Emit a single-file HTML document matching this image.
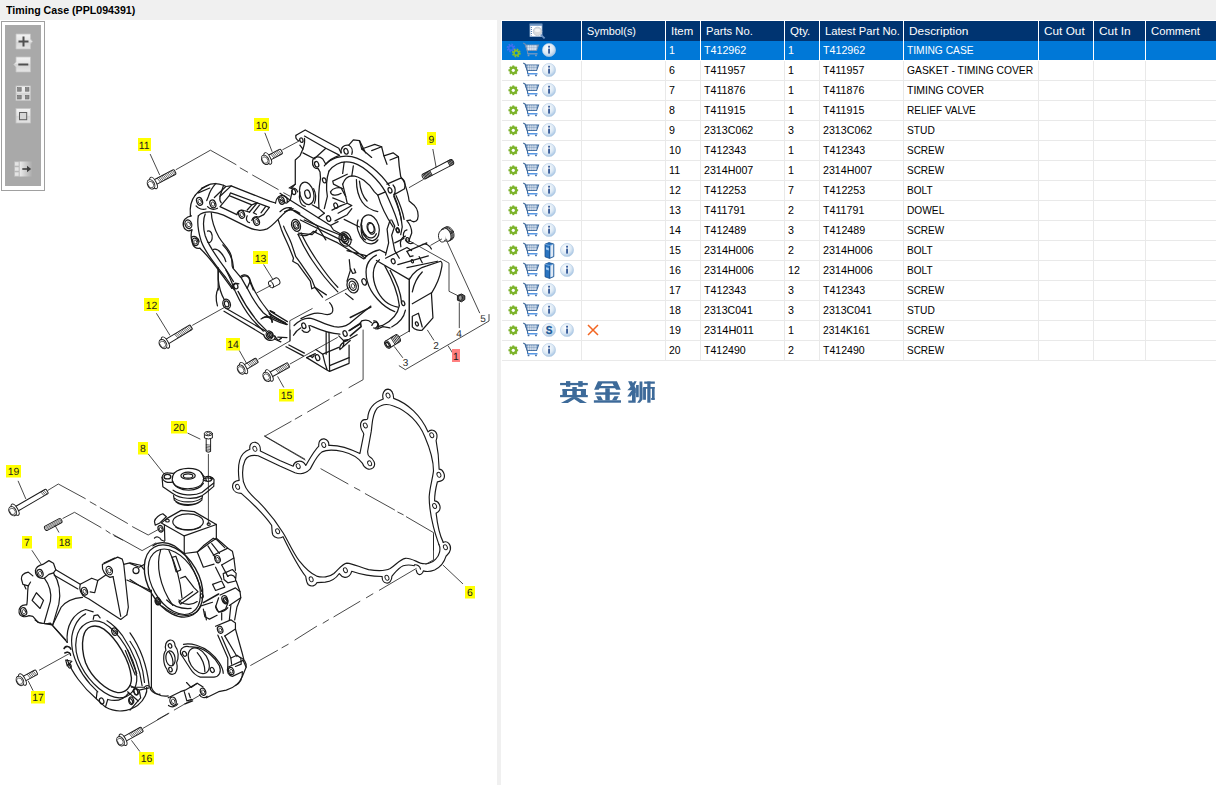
<!DOCTYPE html><html><head><meta charset="utf-8"><title>Timing Case</title><style>html,body{margin:0;padding:0}
body{width:1216px;height:785px;background:#f0f0f0;position:relative;overflow:hidden;font-family:"Liberation Sans",sans-serif;font-size:12px;color:#000}
.title{position:absolute;left:6px;top:3px;font-weight:bold;font-size:11px;line-height:14px;white-space:nowrap;transform-origin:0 50%;transform:scaleX(0.967)}
.left{position:absolute;left:0;top:20px;width:497px;height:765px;background:#fff;overflow:hidden}
.right{position:absolute;left:501px;top:20px;width:715px;height:765px;background:#fff}
.toolbar{position:absolute;left:1px;top:21px;width:44px;height:170px;background:#fff;border:1px solid #a0a0a0;box-sizing:border-box}
.tbin{position:absolute;left:3px;top:3px;width:36px;height:161px;background:#a9a9a9}
.th{position:absolute;top:21px;height:20px;background:#003471;color:#fff;box-sizing:border-box;white-space:nowrap;overflow:hidden}
.th span{position:absolute;left:5px;top:3px;line-height:14px;font-size:11.5px;transform-origin:0 50%;display:inline-block}
.hicon{position:absolute;left:27px;top:2px}
.tr{position:absolute;left:502px;width:714px;height:20px;background:#fff;border-bottom:1px solid #e9e9e9;box-sizing:border-box}
.tr.sel{background:#0078d7;color:#fff;border-bottom:1px solid #fff}
.td{position:absolute;top:0;height:19px;border-right:1px solid #e9e9e9;white-space:nowrap;overflow:hidden}
.tr.sel .td{border-right:1px solid #fff;height:19px}
.td span{position:absolute;left:3px;top:2px;line-height:14px;font-size:11px;transform-origin:0 50%;display:inline-block}
.ic{position:absolute}
.logo{position:absolute;left:554px;top:376px;width:110px;height:34px}
svg{display:block;overflow:visible}
</style></head><body>
<svg width="0" height="0" style="position:absolute"><defs>
<radialGradient id="g-info" cx="0.4" cy="0.35" r="0.7"><stop offset="0" stop-color="#ffffff"/><stop offset="0.6" stop-color="#dbe8f4"/><stop offset="1" stop-color="#9fc0e0"/></radialGradient>
<g id="i-info"><circle cx="7" cy="7" r="6.6" fill="url(#g-info)" stroke="#b5cde6" stroke-width="0.6"/><rect x="6.1" y="5.6" width="1.9" height="5" fill="#3b5f9c"/><rect x="6.1" y="2.8" width="1.9" height="1.8" fill="#3b5f9c"/></g>
<g id="i-gear"><circle cx="6" cy="6" r="3.2" fill="none" stroke="#7db32b" stroke-width="2.6"/><g stroke="#7db32b" stroke-width="2.2"><line x1="6" y1="0.5" x2="6" y2="11.5"/><line x1="0.5" y1="6" x2="11.5" y2="6"/><line x1="2.1" y1="2.1" x2="9.9" y2="9.9"/><line x1="9.9" y1="2.1" x2="2.1" y2="9.9"/></g><circle cx="6" cy="6" r="1.8" fill="#fff"/></g>
<g id="i-cart"><path d="M0.3 1.2 L2.3 2.2 L4.6 9.2 L5 12.6" fill="none" stroke="#3f6a9d" stroke-width="1.2"/><path d="M2.4 3.2 L16.3 3.2 L14.2 9 L4.4 9 Z" fill="#9fb6d2" stroke="#3f6a9d" stroke-width="1.1"/><path d="M5.6 3.4v5.4M7.6 3.4v5.4M9.6 3.4v5.4M11.6 3.4v5.4M13.4 3.4v5.4" stroke="#fff" stroke-width="0.8" fill="none" opacity="0.9"/><path d="M3.4 5.8h12" stroke="#3f6a9d" stroke-width="0.5" opacity="0.6"/><path d="M4.6 12.6 L15.2 12.6" stroke="#2d7fe0" stroke-width="1.3"/><circle cx="5.8" cy="14.3" r="1" fill="#4a6f9e"/><circle cx="13.6" cy="14.3" r="1" fill="#4a6f9e"/></g>
<g id="i-cart-sel"><path d="M0.3 1.2 L2.3 2.2 L4.6 9.2 L5 12.6" fill="none" stroke="#6f8db3" stroke-width="1.2"/><path d="M2.4 3.2 L16.3 3.2 L14.2 9 L4.4 9 Z" fill="#a9c0db" stroke="#6f8db3" stroke-width="1.1"/><path d="M5.6 3.4v5.4M7.6 3.4v5.4M9.6 3.4v5.4M11.6 3.4v5.4M13.4 3.4v5.4" stroke="#fff" stroke-width="0.8" fill="none" opacity="0.9"/><path d="M3.4 5.8h12" stroke="#6f8db3" stroke-width="0.5" opacity="0.6"/><path d="M4.6 12.6 L15.2 12.6" stroke="#7f9dc0" stroke-width="1.3"/><circle cx="5.8" cy="14.3" r="1" fill="#7f9bbb"/><circle cx="13.6" cy="14.3" r="1" fill="#7f9bbb"/></g>
<g id="i-gears"><circle cx="5" cy="5" r="3.2" fill="none" stroke="#3f6ff0" stroke-width="2.4" stroke-dasharray="1.5 1"/><circle cx="5" cy="5" r="2.3" fill="none" stroke="#3f6ff0" stroke-width="1.5"/><circle cx="10.3" cy="10" r="3.2" fill="none" stroke="#86bf2a" stroke-width="2.4" stroke-dasharray="1.5 1"/><circle cx="10.3" cy="10" r="2.3" fill="none" stroke="#86bf2a" stroke-width="1.6"/></g>
<g id="i-book"><path d="M1 2.2 L5 0.6 L9.8 2 L9.8 14.6 L5.6 16.4 L1 14.8 Z" fill="#2a74c0" stroke="#1b4f8c" stroke-width="0.8"/><path d="M5.6 3.6 L5.6 16.2" stroke="#174a86" stroke-width="0.7"/><path d="M6.4 3.6 L9.2 2.6 L9.2 14.2 L6.4 15.4 Z" fill="#dfe9f5"/><path d="M1 2.2 L5.6 3.6 L9.8 2" fill="none" stroke="#8db7e4" stroke-width="0.7"/><path d="M2 5.2 L4.8 6 L4.8 8.4 L2 7.6 Z" fill="#a9cdf0"/></g>
<g id="i-s"><circle cx="7" cy="7" r="6.6" fill="url(#g-info)" stroke="#b5cde6" stroke-width="0.6"/><text x="7" y="10.5" font-family="Liberation Sans" font-weight="bold" font-size="10" fill="#1d5a98" stroke="#1d5a98" stroke-width="0.3" text-anchor="middle">S</text></g>
<g id="i-x"><path d="M1 1 L11 11 M11 1 L1 11" stroke="#f26522" stroke-width="1.5" fill="none"/></g>
<g id="i-find"><rect x="1" y="1" width="12" height="12.5" fill="#fff" stroke="#9db7d6" stroke-width="0.8"/><rect x="1" y="1" width="12" height="1.8" fill="#6d95c4"/><path d="M2.4 4v8.5" stroke="#4a78b0" stroke-width="1" stroke-dasharray="1 1"/><circle cx="8.5" cy="8.4" r="4.2" fill="#dcdcdc" stroke="#c3ccd8" stroke-width="1"/><ellipse cx="8.5" cy="7.4" rx="2.8" ry="1.6" fill="#f4f4f4"/><path d="M11.7 11.6 L15.6 15.4" stroke="#6c93c4" stroke-width="1.8"/></g>
</defs></svg>

<div class="title">Timing Case (PPL094391)</div>
<div class="left"><svg width="497" height="765" viewBox="0 20 497 765" font-family="Liberation Sans" text-rendering="geometricPrecision" fill="none" stroke="#1a1a1a" stroke-width="0.95" stroke-linecap="round" stroke-linejoin="round">
<g transform="translate(230,380) scale(0.21650)" stroke-width="5.31" >
<path d="M42 462 C38 430 36 400 45 370 C52 345 70 328 92 320 C88 300 100 285 118 288 C135 292 142 310 140 328 L230 372 L292 398 C295 378 320 368 338 380 C346 386 348 392 350 395 C365 370 385 330 410 305 C408 285 418 270 435 272 C452 275 458 290 456 302 C500 300 550 315 600 340 L618 250 C615 240 610 235 607 228 C598 205 605 185 622 183 C630 183 635 185 636 178 C638 140 660 105 708 88 C700 65 712 42 730 42 C748 44 755 65 756 85 C822 108 882 165 915 240 C925 226 950 230 955 250 C958 262 955 272 952 280 C960 320 965 370 966 412 C985 413 995 440 988 455 C982 468 968 468 958 470 C950 500 945 530 945 558 C965 558 975 585 968 600 C962 612 955 612 952 615 C958 670 970 720 985 750"/>
<path d="M62 470 C55 430 58 395 70 370 C80 352 100 345 130 350 L230 397 L300 428 C325 438 350 432 370 412 C385 385 400 350 425 332 C445 322 480 322 520 330 C560 340 590 355 612 385 C620 410 645 420 662 405 C675 390 665 365 645 355 C638 350 635 340 636 328 L652 240 C658 200 655 160 680 130 C700 112 730 110 755 120 C820 142 874 198 900 262 C925 320 940 380 940 420 C935 460 922 500 920 540 C920 590 930 640 940 680 C950 720 960 745 965 760"/>
<ellipse cx="115" cy="318" rx="8.5" ry="12" transform="rotate(-25 115 318)" stroke-width="4.2"/>
<ellipse cx="315" cy="398" rx="8.5" ry="12" transform="rotate(-25 315 398)" stroke-width="4.2"/>
<ellipse cx="433" cy="300" rx="8.5" ry="12" transform="rotate(-25 433 300)" stroke-width="4.2"/>
<ellipse cx="645" cy="385" rx="8.5" ry="12" transform="rotate(-25 645 385)" stroke-width="4.2"/>
<ellipse cx="625" cy="210" rx="8.5" ry="12" transform="rotate(-25 625 210)" stroke-width="4.2"/>
<ellipse cx="730" cy="72" rx="8.5" ry="12" transform="rotate(-25 730 72)" stroke-width="4.2"/>
<ellipse cx="932" cy="255" rx="8.5" ry="12" transform="rotate(-25 932 255)" stroke-width="4.2"/>
<ellipse cx="965" cy="438" rx="8.5" ry="12" transform="rotate(-25 965 438)" stroke-width="4.2"/>
<ellipse cx="945" cy="582" rx="8.5" ry="12" transform="rotate(-25 945 582)" stroke-width="4.2"/>
</g>
<g transform="translate(230,470) scale(0.21650)" stroke-width="5.31" >
<path d="M985 334 C1005 325 1022 345 1018 368 C1015 385 1002 392 998 398 C990 425 975 448 945 462 C925 470 905 470 893 466 C890 482 875 488 866 478 C862 472 862 468 860 462"/>
<path d="M852 438 C865 436 878 445 880 458"/>
<path d="M852 442 C835 438 815 438 800 442 C780 450 765 470 748 490 C748 512 735 525 722 522 C708 520 702 505 703 492 C670 492 610 485 562 468 C558 485 545 498 530 496 C515 494 508 482 505 478 C490 500 465 515 440 518 L402 520 C395 537 375 540 362 530 C352 520 352 505 350 492 C310 440 280 380 245 308 C225 320 205 312 198 300 C192 285 195 270 192 255 C150 195 100 150 52 108 C35 108 15 100 12 80 C10 60 25 50 42 48"/>
<path d="M965 344 C975 365 968 395 950 412 C935 430 905 438 880 430 C850 418 830 405 810 408 C785 412 765 440 740 455 C715 468 670 465 640 460 C600 450 570 432 540 430 C520 432 505 455 480 478 C460 495 425 498 400 490 C370 478 340 445 320 420 C290 380 270 330 245 290 C220 250 170 185 130 145 C100 118 75 95 68 70 L62 54"/>
<ellipse cx="35" cy="78" rx="8.5" ry="12" transform="rotate(-25 35 78)" stroke-width="4.2"/>
<ellipse cx="220" cy="283" rx="8.5" ry="12" transform="rotate(-25 220 283)" stroke-width="4.2"/>
<ellipse cx="375" cy="505" rx="8.5" ry="12" transform="rotate(-25 375 505)" stroke-width="4.2"/>
<ellipse cx="533" cy="463" rx="8.5" ry="12" transform="rotate(-25 533 463)" stroke-width="4.2"/>
<ellipse cx="725" cy="498" rx="8.5" ry="12" transform="rotate(-25 725 498)" stroke-width="4.2"/>
<ellipse cx="995" cy="357" rx="8.5" ry="12" transform="rotate(-25 995 357)" stroke-width="4.2"/>
</g>
<g transform="translate(180,170) scale(0.15281)" stroke-width="8.18" >
<path d="M75 300 C40 305 15 330 22 365 C28 395 55 405 78 392"/>
<path d="M100 165 C75 195 62 240 68 300"/>
<path d="M78 392 C70 420 72 450 80 475 C85 500 105 518 130 512"/>
<path d="M75 440 C95 425 120 440 125 470"/>
<path d="M100 165 C120 140 160 105 200 92 C230 85 260 90 285 100 L300 108 L335 104 L400 130 L590 205 L625 216"/>
<path d="M625 216 C630 180 655 160 680 168 C700 175 705 195 700 215 L722 195 L735 135"/>
<path d="M235 88 C215 110 195 140 185 175 L175 200"/>
<path d="M300 108 L225 180 M335 104 L262 172 M140 120 L185 100 M120 150 L195 118"/>
<path d="M285 100 L262 172 C258 190 262 205 270 215"/>
<path d="M330 150 L505 215 L585 245 L548 292 M330 150 L322 168 L470 228 L505 215 M470 228 L440 262 M322 168 L262 240 L372 292"/>
<path d="M505 215 L455 275 M520 230 L480 280 L500 290 M560 240 L530 280 M440 300 C430 320 435 340 455 345"/>
<path d="M372 292 C375 270 395 258 418 265 L455 275"/>
<path d="M470 330 C475 310 495 300 515 308 L548 292"/>
<path d="M105 235 C120 255 150 262 170 255 M180 240 C195 258 225 262 245 250"/>
<path d="M120 300 C140 280 175 272 210 275 C240 278 260 285 285 295 L440 372 C480 392 530 402 570 385 C610 365 650 310 690 275 C705 262 720 255 740 252"/>
<path d="M120 300 C112 340 118 400 140 470 C165 540 230 620 300 705 L355 785"/>
<path d="M165 288 C150 320 150 380 165 430 C185 490 240 570 300 650 L350 730"/>
<path d="M205 280 C205 320 225 390 255 440 C285 490 325 520 335 560 C345 600 335 620 345 640 L395 700"/>
<path d="M350 640 C345 560 310 520 280 490"/>
<path d="M180 400 C200 390 215 420 210 450 C205 475 190 480 180 470"/>
<path d="M220 520 C250 510 290 560 300 600"/>
<path d="M130 512 C160 540 220 610 270 680 L340 775"/>
<path d="M250 640 L250 785"/>
<path d="M395 700 C405 685 430 680 445 695 C460 715 455 740 470 760 L480 785"/>
<path d="M340 775 C345 750 365 735 385 745"/>
<ellipse cx="55" cy="355" rx="21.25" ry="28.75" transform="rotate(-20 55 355)" /><ellipse cx="56" cy="356" rx="11.899999999999999" ry="16.099999999999998" transform="rotate(-20 56 356)" stroke-width="5"/>
<ellipse cx="128" cy="205" rx="18.75" ry="26.25" transform="rotate(-20 128 205)" /><ellipse cx="129" cy="206" rx="10.5" ry="14.7" transform="rotate(-20 129 206)" stroke-width="5"/>
<ellipse cx="215" cy="222" rx="18.75" ry="26.25" transform="rotate(-20 215 222)" /><ellipse cx="216" cy="223" rx="10.5" ry="14.7" transform="rotate(-20 216 223)" stroke-width="5"/>
<ellipse cx="403" cy="290" rx="18.75" ry="26.25" transform="rotate(-20 403 290)" /><ellipse cx="404" cy="291" rx="10.5" ry="14.7" transform="rotate(-20 404 291)" stroke-width="5"/>
<ellipse cx="500" cy="337" rx="18.75" ry="26.25" transform="rotate(-20 500 337)" /><ellipse cx="501" cy="338" rx="10.5" ry="14.7" transform="rotate(-20 501 338)" stroke-width="5"/>
<ellipse cx="100" cy="470" rx="17.5" ry="25.0" transform="rotate(-20 100 470)" /><ellipse cx="101" cy="471" rx="9.799999999999999" ry="14.0" transform="rotate(-20 101 471)" stroke-width="5"/>
<ellipse cx="665" cy="200" rx="17.5" ry="25.0" transform="rotate(-20 665 200)" /><ellipse cx="666" cy="201" rx="9.799999999999999" ry="14.0" transform="rotate(-20 666 201)" stroke-width="5"/>
</g>
<g transform="translate(280,120) scale(0.15281)" stroke-width="8.18" >
<path d="M105 100 L165 65 L385 185 L400 215"/>
<path d="M105 100 C100 115 108 128 120 135 M130 165 L150 190 L130 235 L100 262 L100 420 L72 448"/>
<path d="M160 105 L300 185 L228 250 M150 215 L228 255 M300 185 L385 228"/>
<path d="M150 190 C160 160 165 140 160 120"/>
<path d="M213 270 C215 240 255 232 280 255 L300 290 C320 265 350 245 390 232"/>
<path d="M213 270 C210 300 225 320 250 318 L262 340 L265 380"/>
<path d="M400 215 C395 180 420 160 450 165 L480 130 L520 135 L535 190 L620 160 L665 175 L680 235 L740 215 L775 240 L780 300 L790 370 L810 400 C825 440 840 490 845 530 L880 560 C900 580 910 620 900 650 C890 668 870 672 852 655"/>
<path d="M450 165 C470 175 478 200 470 225 M520 135 L560 215 M665 175 L600 200 M775 240 L720 262 M680 235 L700 290 M535 190 L600 245"/>
<path d="M852 655 L830 658 C850 680 862 700 862 740 L845 785"/>
<path d="M290 300 C330 250 400 228 470 240 C560 260 660 350 715 430"/>
<path d="M745 490 C775 560 795 630 800 700 L790 750"/>
<path d="M320 335 C360 282 420 265 480 280 C560 305 650 400 690 470 L640 492 L618 470 C580 410 520 365 470 365 C440 368 420 390 410 420"/>
<path d="M410 420 L430 500 L440 545 L400 560"/>
<path d="M320 335 C305 380 300 440 310 500 L290 580"/>
<path d="M700 420 L790 380 C815 385 825 420 815 450 L745 490 C760 470 755 440 740 425"/>
<path d="M640 492 C660 560 700 640 740 700 M690 470 C720 540 760 620 775 690"/>
<path d="M745 500 C770 560 790 620 795 660 M760 495 C790 560 805 610 812 650"/>
<path d="M345 400 L440 355 M345 400 L350 420 L400 445 M330 470 C345 445 385 435 410 450 M330 470 C335 495 370 500 400 480"/>
<path d="M400 445 L430 500 M345 510 L420 540 M470 365 L480 300 M420 275 L410 350"/>
<path d="M500 390 C500 450 510 500 540 540 C560 570 600 590 640 600 M520 400 C525 450 540 500 570 530"/>
<path d="M440 545 L470 560 L380 610 M400 560 L340 590 M470 580 L440 620 L360 660"/>
<path d="M265 380 C255 440 250 520 255 580 L210 555 M255 580 L290 610"/>
<path d="M100 420 L60 445 M72 448 C90 440 110 450 115 470"/>
<path d="M290 610 L250 640 L330 690 L380 665 M330 690 L350 720 L470 785 M420 650 L520 700"/>
<path d="M0 480 L60 520 L250 640 M0 520 L40 545 M60 575 L240 690 L300 785 M30 600 C60 580 100 590 130 610"/>
<path d="M0 600 C20 580 50 570 75 575 M120 740 L210 750 L240 720"/>
<ellipse cx="175" cy="480" rx="45" ry="75" transform="rotate(-15 175 480)" />
<ellipse cx="180" cy="485" rx="17" ry="28" transform="rotate(-15 180 485)" />
<path d="M130 470 C120 520 135 560 165 565 M220 450 C235 480 235 520 225 545"/>
<ellipse cx="590" cy="705" rx="58" ry="85" transform="rotate(-15 590 705)" />
<ellipse cx="598" cy="712" rx="22" ry="36" transform="rotate(-15 598 712)" />
<path d="M535 690 C525 740 540 780 560 785"/>
<ellipse cx="140" cy="132" rx="10" ry="15" transform="rotate(-20 140 132)" />
<ellipse cx="240" cy="290" rx="13" ry="19" transform="rotate(-20 240 290)" />
<ellipse cx="432" cy="205" rx="13" ry="19" transform="rotate(-20 432 205)" />
<ellipse cx="290" cy="395" rx="11" ry="17" transform="rotate(-20 290 395)" />
<ellipse cx="365" cy="560" rx="12" ry="18" transform="rotate(-20 365 560)" />
<ellipse cx="318" cy="645" rx="13" ry="19" transform="rotate(-20 318 645)" />
<ellipse cx="720" cy="460" rx="12" ry="18" transform="rotate(-20 720 460)" />
<ellipse cx="770" cy="720" rx="10" ry="16" transform="rotate(-20 770 720)" />
<ellipse cx="90" cy="470" rx="12" ry="18" transform="rotate(-20 90 470)" />
<ellipse cx="105" cy="690" rx="28" ry="40" transform="rotate(-20 105 690)" />
<ellipse cx="105" cy="690" rx="17" ry="25" transform="rotate(-20 105 690)" />
<ellipse cx="107" cy="692" rx="9" ry="14" transform="rotate(-20 107 692)" stroke-width="5"/>
<ellipse cx="420" cy="770" rx="20" ry="28" transform="rotate(-20 420 770)" />
<ellipse cx="420" cy="770" rx="10" ry="15" transform="rotate(-20 420 770)" />
</g>
<g transform="translate(180,270) scale(0.15281)" stroke-width="8.18" >
<path d="M250 0 L250 60 C255 110 270 160 290 195 M250 120 C235 150 235 200 245 235"/>
<path d="M400 50 C420 28 455 38 460 70 L440 120 L400 50"/>
<path d="M300 0 C330 50 345 100 362 140 C385 190 430 270 470 320 L545 400"/>
<path d="M380 140 C410 200 460 280 510 340 L565 395"/>
<path d="M440 120 C460 160 500 230 545 280 C590 320 650 345 700 358"/>
<path d="M460 70 C480 130 530 210 570 260 L600 300"/>
<path d="M300 250 L560 400 M288 270 L548 425"/>
<path d="M530 320 C560 298 600 310 605 340 M585 290 L690 345 M600 300 L585 290"/>
<path d="M548 425 C555 455 590 470 615 455 C625 448 625 440 620 432 M640 440 L700 442 M625 455 L660 470"/>
<ellipse cx="305" cy="222" rx="24" ry="32" transform="rotate(-20 305 222)" />
<ellipse cx="305" cy="222" rx="14" ry="20" transform="rotate(-20 305 222)" />
<ellipse cx="365" cy="105" rx="13" ry="19" transform="rotate(-20 365 105)" />
<ellipse cx="585" cy="425" rx="20" ry="27" transform="rotate(-20 585 425)" />
<ellipse cx="585" cy="425" rx="11" ry="16" transform="rotate(-20 585 425)" />
</g>
<g transform="translate(300,220) scale(0.15281)" stroke-width="8.18" >
<ellipse cx="295" cy="125" rx="38" ry="48" transform="rotate(-25 295 125)" />
<ellipse cx="295" cy="125" rx="23" ry="31" transform="rotate(-25 295 125)" />
<ellipse cx="297" cy="127" rx="12" ry="17" transform="rotate(-25 297 127)" stroke-width="5"/>
<path d="M380 0 C365 40 380 100 420 140 C450 165 490 160 510 130 M405 0 C395 40 410 90 440 110 C465 125 490 115 500 90"/>
<ellipse cx="462" cy="50" rx="22" ry="34" transform="rotate(-15 462 50)" />
<ellipse cx="345" cy="430" rx="36" ry="48" transform="rotate(-20 345 430)" />
<ellipse cx="345" cy="430" rx="22" ry="31" transform="rotate(-20 345 430)" />
<ellipse cx="347" cy="432" rx="11" ry="16" transform="rotate(-20 347 432)" stroke-width="5"/>
<path d="M330 320 L345 350 L365 345 L355 320"/>
<ellipse cx="420" cy="405" rx="14" ry="22" transform="rotate(-20 420 405)" />
<path d="M500 230 C440 260 420 320 440 400 C460 480 540 570 620 600 M520 260 C470 300 470 380 500 450 C530 520 580 560 640 570"/>
<path d="M555 300 C600 380 640 470 650 560 M590 330 C630 400 660 480 665 540"/>
<path d="M430 240 C460 215 490 200 520 195 L560 215"/>
<path d="M650 560 C640 620 600 660 540 690 L505 700 M470 690 C480 660 510 660 515 690 C518 705 505 715 495 712"/>
<path d="M690 590 C680 640 640 680 600 700"/>
<path d="M500 265 L715 390 L715 730 M715 390 C740 340 790 310 830 300 L920 270 C935 275 930 300 925 320 C915 380 885 440 860 480 L870 640 L800 720 C780 725 750 720 735 700 L735 630 L775 610 L800 700"/>
<path d="M735 548 L860 476 M735 470 C745 420 770 370 800 340"/>
<path d="M640 292 L840 235 M700 312 L900 270 M560 250 L700 180 L730 200 M650 250 L620 200 L600 100 L620 40 L600 0"/>
<path d="M560 230 L580 150 L570 60 L590 0 M620 150 L680 120 C670 90 680 70 700 65 M690 130 C700 150 720 160 740 150"/>
<path d="M660 175 C650 140 665 110 690 105 M700 205 L830 150 M800 160 C820 150 850 165 860 190"/>
<path d="M700 205 L720 240 L740 235 M780 240 L800 280"/>
<ellipse cx="610" cy="270" rx="12" ry="17" transform="rotate(-20 610 270)" />
<ellipse cx="735" cy="270" rx="7" ry="11" transform="rotate(-20 735 270)" />
<ellipse cx="675" cy="545" rx="10" ry="16" transform="rotate(-20 675 545)" />
<ellipse cx="765" cy="680" rx="9" ry="14" transform="rotate(-20 765 680)" />
<ellipse cx="640" cy="70" rx="9" ry="14" transform="rotate(-20 640 70)" />
<ellipse cx="705" cy="130" rx="10" ry="15" transform="rotate(-20 705 130)" />
</g>
<g transform="translate(270,290) scale(0.11461)" stroke-width="10.91" >
<path d="M210 310 C250 270 300 245 340 245 C400 250 470 300 560 320 C620 330 680 310 720 270 L880 140"/>
<path d="M205 395 C220 370 245 345 270 330"/>
<path d="M350 310 C420 340 500 380 610 385 M340 310 L350 350 L330 368 C310 372 290 365 280 350"/>
<path d="M520 110 C550 140 555 180 540 200 C520 220 480 215 450 205 C400 192 340 210 270 250"/>
<path d="M700 240 L880 150" stroke-width="13"/>
<path d="M700 350 L780 300 L800 270 C830 258 865 262 885 285 M905 270 C935 265 950 295 935 320 C925 335 910 335 905 330 M940 340 L985 320 L1047 330"/>
<path d="M690 355 L790 290 L795 320 L700 400" stroke-width="14"/>
<path d="M600 400 L640 440 L690 430 L760 390 M610 520 C600 480 640 450 680 440 M610 520 L700 440 M640 440 C650 470 640 500 610 520"/>
<path d="M320 590 L500 700 L520 710 L690 640 L690 480 M490 370 L490 560 M515 375 L520 700 M400 520 L460 560 L480 640 L500 700"/>
<path d="M520 660 L690 590 M460 560 L600 500 M320 590 L395 555"/>
<path d="M350 575 L370 590 L385 570"/>
<path d="M140 495 L290 575 M165 480 L300 550" stroke-width="12"/>
<path d="M40 400 L70 440 L100 420 M0 230 L150 300 M0 180 L40 200"/>
<ellipse cx="295" cy="312" rx="17" ry="25" transform="rotate(-20 295 312)" />
<ellipse cx="655" cy="380" rx="17" ry="25" transform="rotate(-20 655 380)" />
<ellipse cx="415" cy="590" rx="18" ry="27" transform="rotate(-20 415 590)" />
<ellipse cx="10" cy="390" rx="17" ry="25" transform="rotate(-20 10 390)" />
</g>
<g transform="translate(387.5,344.6) rotate(-32)"><path d="M0 -4 L12 -4 Q14 -4 14 0 Q14 4 12 4 L0 4Z" fill="#fff"/><path d="M6.5 -4L6.5 4M8 -4L8 4M9.5 -4L9.5 4M11 -4L11 4M12.5 -3.6L12.5 3.6" stroke-width="0.8"/><ellipse cx="0" cy="0" rx="2.4" ry="4" fill="#fff"/><ellipse cx="0" cy="0" rx="1.3" ry="2.6" stroke-width="1.4"/></g>
<g transform="translate(461,298)"><path d="M-3.2 -2.6 L0.5 -4 L3.8 -2.2 L3.8 1.6 L0.5 3.8 L-3.2 2.4Z" fill="#555" stroke-width="1"/><ellipse cx="-0.6" cy="-0.2" rx="2" ry="2.6" fill="#999" stroke-width="0.8"/></g>
<g><ellipse cx="449" cy="233.2" rx="4.6" ry="7" transform="rotate(-25 449 233.2)" fill="#fff" stroke-width="0.8"/><ellipse cx="448" cy="233.7" rx="4.6" ry="7" transform="rotate(-25 448 233.7)" fill="#fff" stroke-width="0.8"/><ellipse cx="447" cy="234.2" rx="4.6" ry="7" transform="rotate(-25 447 234.2)" fill="#fff" stroke-width="0.8"/><ellipse cx="446" cy="234.7" rx="4.6" ry="7" transform="rotate(-25 446 234.7)" fill="#fff"/><path d="M444.6 229.6 C443 232 443.4 237.6 446.6 240.6" stroke="#666" stroke-width="2"/><path d="M442.6 229.4 C438.4 230.8 437 236.6 440.4 241.2 L445.5 239.6 L446 229Z" fill="#fff" stroke="none"/><path d="M443.6 229 C438.4 230 436.8 236.8 440.4 241.4 C441.6 242.4 443.4 242.2 444.6 241.2"/></g>
<g transform="translate(424,176.5) rotate(-27.5)"><path d="M0 -2.7 L31 -2.7 Q33 -2.7 33 0 Q33 2.7 31 2.7 L0 2.7 Q-1.6 2.7 -1.6 0 Q-1.6 -2.7 0 -2.7Z" fill="#fff"/><path d="M0 -2.7L0 2.7M1.3 -2.7L1.3 2.7M2.6 -2.7L2.6 2.7M3.9 -2.7L3.9 2.7M5.2 -2.7L5.2 2.7M6.5 -2.7L6.5 2.7M7.8 -2.7L7.8 2.7M28 -2.7L28 2.7M29.3 -2.7L29.3 2.7M30.6 -2.7L30.6 2.7M31.9 -2.5L31.9 2.5" stroke-width="0.9"/></g>
<g transform="translate(271,284.5) rotate(-28)"><path d="M0 -3.6 L7 -3.6 Q9.4 -3.6 9.4 0 Q9.4 3.6 7 3.6 L0 3.6Z" fill="#fff"/><ellipse cx="0" cy="0" rx="2" ry="3.6" fill="#fff"/></g>
<g transform="translate(208.4,432)"><path d="M-2.2 6 L-2.2 19.5 Q0 21 2.2 19.5 L2.2 6Z" fill="#fff"/><path d="M-2.2 12.5L2.2 13.2M-2.2 14L2.2 14.7M-2.2 15.5L2.2 16.2M-2.2 17L2.2 17.7M-2.2 18.5L2.2 19.2" stroke-width="0.6"/><path d="M-4 1.6 L-4 6 Q0 8 4 6 L4 1.6" fill="#fff"/><ellipse cx="0" cy="1.6" rx="4" ry="2.2" fill="#fff"/><ellipse cx="0" cy="1.6" rx="2" ry="1.1" stroke-width="0.7"/></g>
<g transform="translate(46.2,528.3) rotate(-28.5)"><path d="M0 -2.4 L16 -2.4 Q17.5 -2.4 17.5 0 Q17.5 2.4 16 2.4 L0 2.4 Q-1.5 2.4 -1.5 0 Q-1.5 -2.4 0 -2.4Z" fill="#fff"/><path d="M0 -1.2L17 -1.2M0 0L17 0M0 1.2L17 1.2" stroke-width="0.7" stroke="#555"/></g>
<g transform="translate(240,220) scale(0.15284)" stroke-width="8.18" >
<path d="M250 0 L270 60 C285 100 300 130 320 175 L350 250 L345 270 L380 290 L460 400 L470 450 L490 440 L540 505"/>
<path d="M285 40 C300 80 320 110 335 150 L365 240 L395 280 L470 390 L490 440 L565 490"/>
<path d="M380 95 C400 140 430 200 470 260 C510 320 570 400 640 470"/>
<path d="M400 85 C420 130 460 200 500 260 C540 320 590 390 640 440"/>
<path d="M380 95 C420 110 460 100 480 75 L500 80"/>
<path d="M395 0 L660 130 L820 250 M420 0 L560 60 L660 100 M480 75 L640 150 L810 255 L830 235 L700 200"/>
<path d="M715 260 L722 330 L700 400 M690 480 L740 520"/>
<path d="M150 640 C180 620 210 640 210 670"/>
<path d="M190 610 L300 680 M200 598 L310 665"/>
</g>
<g transform="translate(0,540) scale(0.15281)" stroke-width="7.85" >
<path d="M232 200 C235 175 260 165 280 160 L320 135 L350 152 L365 195 L525 290"/>
<path d="M232 200 C230 235 255 255 290 250 L320 225 L350 215 L365 195"/>
<path d="M140 255 C138 230 160 215 185 210 L215 235 M140 255 L150 290 L185 300 L200 275 M160 300 L170 320"/>
<path d="M185 300 C178 340 182 390 175 425 C140 420 120 445 125 475 C130 500 160 510 190 495 L215 500 L250 540 L340 555 L440 670"/>
<path d="M210 395 L238 345 L285 395 L262 448Z"/>
<path d="M290 250 C320 290 340 340 330 400 L290 540 M350 215 C385 270 400 340 385 420 L345 555"/>
<path d="M355 230 L510 320"/>
<path d="M525 290 L600 250 L640 265 L620 345 L590 340 M525 290 C515 320 530 360 560 375 L580 385 L790 520 L830 490"/>
<path d="M670 160 L770 112 L800 125 L810 160 L850 150 L920 165 L940 190 M670 160 C665 200 690 235 720 245 L740 240 M640 265 L690 230"/>
<path d="M680 150 L750 118 M810 160 L840 440 L830 490 M740 240 L790 500"/>
<ellipse cx="890" cy="200" rx="20" ry="20" transform="rotate(0 890 200)" />
<path d="M400 440 C430 400 480 380 540 375 M345 555 L400 440 M440 670 C430 560 480 480 560 455 L610 470"/>
<path d="M610 520 L615 495 L640 490 L655 510"/>
<path d="M830 262 L985 330"/>
<path d="M420 712 C430 690 460 695 465 715 M425 740 C440 730 460 735 462 755"/>
<ellipse cx="262" cy="218" rx="19" ry="26" transform="rotate(-20 262 218)" /><ellipse cx="263" cy="219" rx="10.450000000000001" ry="14.3" transform="rotate(-20 263 219)" stroke-width="5"/>
<ellipse cx="155" cy="468" rx="19" ry="26" transform="rotate(-20 155 468)" /><ellipse cx="156" cy="469" rx="10.450000000000001" ry="14.3" transform="rotate(-20 156 469)" stroke-width="5"/>
<ellipse cx="553" cy="335" rx="19" ry="26" transform="rotate(-20 553 335)" /><ellipse cx="554" cy="336" rx="10.450000000000001" ry="14.3" transform="rotate(-20 554 336)" stroke-width="5"/>
<ellipse cx="715" cy="200" rx="20" ry="28" transform="rotate(-20 715 200)" /><ellipse cx="716" cy="201" rx="11.0" ry="15.400000000000002" transform="rotate(-20 716 201)" stroke-width="5"/>
<ellipse cx="750" cy="600" rx="18" ry="25" transform="rotate(-20 750 600)" /><ellipse cx="751" cy="601" rx="9.9" ry="13.750000000000002" transform="rotate(-20 751 601)" stroke-width="5"/>
<ellipse cx="1035" cy="400" rx="16" ry="24" transform="rotate(-20 1035 400)" />
</g>
<g transform="translate(0,620) scale(0.15281)" stroke-width="7.85" >
<path d="M545 110 C560 40 620 20 680 60 C760 120 850 260 860 380 C862 440 820 480 770 475 C700 465 600 380 560 280 C540 220 535 160 545 110Z" stroke-width="9"/>
<path d="M500 120 C515 30 600 -20 680 20 C780 80 880 240 895 370 C900 450 850 510 780 510 C700 505 590 420 530 300 C500 240 490 170 500 120"/>
<path d="M470 165 C460 80 500 -10 560 -40 M470 165 C475 240 520 340 590 420 L640 470 M930 430 C920 340 880 220 800 100 C770 60 740 30 700 5"/>
<path d="M440 260 C470 340 540 440 630 515 L635 470 M630 515 L690 570 L705 520 M690 570 C760 610 840 600 900 560 C950 520 965 470 960 440"/>
<path d="M705 520 C760 535 810 520 840 480 M835 470 L905 530 M860 440 L945 440"/>
<path d="M418 185 C430 165 455 168 462 190 M425 215 C440 205 458 210 462 228 M430 262 L470 270 L440 300Z"/>
<path d="M820 200 L885 360 M835 195 L895 350"/>
<ellipse cx="665" cy="530" rx="14" ry="20" transform="rotate(-20 665 530)" />
<ellipse cx="860" cy="525" rx="14" ry="22" transform="rotate(-20 860 525)" />
<ellipse cx="890" cy="470" rx="12" ry="20" transform="rotate(-20 890 470)" />
<ellipse cx="455" cy="300" rx="10" ry="15" transform="rotate(-20 455 300)" />
<path d="M985 440 L985 455 C1000 480 1030 490 1047 485 M945 440 C960 420 985 430 985 455"/>
<path d="M230 0 C250 20 290 30 330 20 L430 130"/>
</g>
<g transform="translate(130,500) scale(0.15281)" stroke-width="7.85" >
<path d="M205 150 L240 122 L335 68 L420 76 L565 160 L355 235Z"/>
<ellipse cx="380" cy="143" rx="100" ry="52" transform="rotate(0 380 143)" />
<path d="M300 178 C340 202 420 202 462 176"/>
<ellipse cx="245" cy="135" rx="12" ry="9" transform="rotate(0 245 135)" />
<ellipse cx="515" cy="158" rx="10" ry="8" transform="rotate(0 515 158)" />
<path d="M225 165 L228 265 M355 235 L355 350 M565 160 L565 250 L520 282 L440 340 L355 350"/>
<path d="M160 140 C165 115 195 95 215 90 L238 110 L195 150 M160 140 L165 165 L195 150"/>
<ellipse cx="200" cy="188" rx="16" ry="22" transform="rotate(-20 200 188)" /><ellipse cx="201" cy="189" rx="8.8" ry="12.100000000000001" transform="rotate(-20 201 189)" stroke-width="5"/>
<path d="M160 250 C170 235 195 240 205 262 L225 270"/>
<path d="M160 314 " />
<ellipse cx="285" cy="530" rx="165" ry="255" transform="rotate(-30 285 530)" stroke-width="9"/>
<ellipse cx="290" cy="535" rx="145" ry="232" transform="rotate(-30 290 535)" />
<path d="M150 300 C190 270 240 275 290 300 L355 350"/>
<path d="M275 375 L300 368 L332 458 L302 470Z M330 512 L362 500 L420 575 L445 600 L330 682 L320 665 L410 600"/>
<path d="M255 330 C300 420 330 520 340 640 M200 330 C170 420 190 560 280 690"/>
<path d="M355 350 C400 420 440 500 470 600"/>
<path d="M545 362 L640 315 L670 335 L680 380 L600 425"/>
<ellipse cx="573" cy="387" rx="17" ry="24" transform="rotate(-20 573 387)" /><ellipse cx="574" cy="388" rx="9.350000000000001" ry="13.200000000000001" transform="rotate(-20 574 388)" stroke-width="5"/>
<path d="M610 482 L670 455 L695 480 L690 530 L640 542 L615 520Z M640 500 C650 485 680 490 688 510"/>
<path d="M590 622 L690 575 L720 600 L725 640 L650 690"/>
<ellipse cx="620" cy="650" rx="18" ry="25" transform="rotate(-20 620 650)" /><ellipse cx="621" cy="651" rx="9.9" ry="13.750000000000002" transform="rotate(-20 621 651)" stroke-width="5"/>
<path d="M440 340 L480 300 L545 250 L570 262 L620 312 M480 440 L440 340 M480 440 L550 420 M510 300 L560 380 M535 285 L585 350"/>
<path d="M565 250 L600 280 L640 315 M680 380 L690 460 M695 530 L720 600 M725 640 L700 700 L685 785"/>
<path d="M540 552 L600 530 L620 570 L560 592Z M560 440 L600 520 M600 425 L640 500"/>
<path d="M480 672 L580 615" stroke-width="10"/>
<path d="M490 730 L500 785 M560 700 C570 740 600 745 640 705 M580 640 L560 700 M660 690 L650 785 M600 740 L600 785"/>
<ellipse cx="470" cy="628" rx="9" ry="14" transform="rotate(-20 470 628)" />
<path d="M0 415 L60 440 L95 420 M0 520 L60 560 L130 600"/>
</g>
<g transform="translate(130,600) scale(0.15281)" stroke-width="7.85" >
<path d="M140 -65 L140 570 C150 610 200 635 250 628"/>
<path d="M250 640 L330 600 L360 590 L440 545 L478 570 M500 640 L580 600 L630 590 C680 575 720 540 735 500 L760 440 C765 410 745 385 720 375"/>
<ellipse cx="282" cy="662" rx="20" ry="28" transform="rotate(-20 282 662)" /><ellipse cx="283" cy="663" rx="11.0" ry="15.400000000000002" transform="rotate(-20 283 663)" stroke-width="5"/>
<ellipse cx="478" cy="600" rx="17" ry="24" transform="rotate(-20 478 600)" /><ellipse cx="479" cy="601" rx="9.350000000000001" ry="13.200000000000001" transform="rotate(-20 479 601)" stroke-width="5"/>
<path d="M252 690 C270 705 300 700 312 680 M455 620 C465 640 490 645 505 630"/>
<path d="M640 440 L740 395 L760 440 M640 440 C630 470 645 495 670 500 L735 470"/>
<ellipse cx="662" cy="465" rx="17" ry="24" transform="rotate(-20 662 465)" /><ellipse cx="663" cy="466" rx="9.350000000000001" ry="13.200000000000001" transform="rotate(-20 663 466)" stroke-width="5"/>
<path d="M660 380 L700 362 L725 380 L728 420 L690 435 M660 380 L665 420"/>
<path d="M560 172 L660 130 L690 150 L690 190 L620 235"/>
<ellipse cx="590" cy="195" rx="17" ry="24" transform="rotate(-20 590 195)" /><ellipse cx="591" cy="196" rx="9.350000000000001" ry="13.200000000000001" transform="rotate(-20 591 196)" stroke-width="5"/>
<path d="M620 235 L700 370 M575 230 L640 380 L640 440 M690 190 L735 350 L745 390 M600 240 L660 380"/>
<path d="M262 262 C235 265 225 300 235 330 C215 350 215 420 240 450 C245 480 270 495 295 480 C310 460 310 430 305 410 C320 380 320 330 295 300 C295 275 280 260 262 262Z"/>
<ellipse cx="265" cy="382" rx="30" ry="50" transform="rotate(-8 265 382)" />
<ellipse cx="262" cy="300" rx="11" ry="15" transform="rotate(-20 262 300)" />
<ellipse cx="265" cy="455" rx="11" ry="15" transform="rotate(-20 265 455)" />
<path d="M255 340 C275 360 285 400 280 425"/>
<path d="M330 335 C335 310 360 300 385 305 L440 310 C500 325 560 380 585 430 C600 470 585 500 550 505 L460 505 C430 495 410 475 395 450 L340 365 C330 355 328 345 330 335Z"/>
<ellipse cx="450" cy="398" rx="58" ry="92" transform="rotate(-32 450 398)" />
<ellipse cx="357" cy="352" rx="12" ry="17" transform="rotate(-30 357 352)" />
<ellipse cx="538" cy="458" rx="12" ry="17" transform="rotate(-30 538 458)" />
<path d="M440 345 C470 380 490 430 490 470 M350 290 C400 280 470 300 520 340 C570 380 610 440 610 480"/>
<path d="M210 40 C260 80 320 105 380 100 C420 95 450 70 460 40 L540 15 M480 60 L490 110 L520 125 L570 100 M560 40 L580 80 L625 60 L640 20"/>
<path d="M320 0 C340 30 400 40 440 10 M240 0 C280 40 340 60 400 55"/>
<ellipse cx="180" cy="12" rx="15" ry="20" transform="rotate(-20 180 12)" /><ellipse cx="181" cy="13" rx="8.25" ry="11.0" transform="rotate(-20 181 13)" stroke-width="5"/>
<ellipse cx="625" cy="5" rx="15" ry="20" transform="rotate(-20 625 5)" /><ellipse cx="626" cy="6" rx="8.25" ry="11.0" transform="rotate(-20 626 6)" stroke-width="5"/>
<path d="M370 540 L400 572 L440 545 M355 600 L372 660 L405 650 M385 610 L395 640 M360 680 L410 660"/>
<path d="M690 560 C720 545 740 510 735 470"/>
<path d="M0 215 C60 300 110 420 125 560 M0 270 C50 340 85 440 95 540"/>
<path d="M0 560 L60 590 L125 575 M60 590 L70 640 L0 720"/>
<ellipse cx="38" cy="600" rx="14" ry="22" transform="rotate(-20 38 600)" />
<ellipse cx="5" cy="665" rx="12" ry="20" transform="rotate(-20 5 665)" />
</g>
<g transform="translate(130,410) scale(0.15281)" stroke-width="7.85" >
<path d="M210 440 C212 420 230 410 250 412 C265 412 278 418 290 412 C330 375 430 372 465 408 C472 420 478 435 490 440 C510 430 540 435 550 455 L548 500 L500 540 L470 562 C420 588 330 582 282 548 L215 502Z"/>
<path d="M210 440 C215 470 250 480 280 470 M282 525 C330 560 420 565 470 540 L548 478"/>
<path d="M290 412 C270 440 270 475 300 495 C350 525 430 520 465 490 C490 465 485 430 465 408"/>
<path d="M280 470 C290 500 330 525 385 525 C430 522 465 505 480 480"/>
<ellipse cx="380" cy="430" rx="47" ry="23" transform="rotate(0 380 430)" />
<ellipse cx="380" cy="432" rx="31" ry="14" transform="rotate(0 380 432)" />
<ellipse cx="245" cy="436" rx="22" ry="15" transform="rotate(0 245 436)" stroke-width="9"/>
<path d="M480 455 C490 440 525 440 535 455 C530 470 495 472 480 455 M495 445 L500 465 M528 440 L540 450"/>
<path d="M285 560 L290 590 C330 628 430 628 470 590 L474 562 M288 575 C330 610 430 610 472 575 M300 600 C340 632 420 632 462 598"/>
</g>
<path d="M176.1 169.6L210.4 150.2L236.0 164.6" stroke-width="0.8"/>
<path d="M240.2 167.9L247.6 172.1" stroke-width="0.8"/>
<path d="M252.6 175.1L278.2 189.5" stroke-width="0.8"/>
<path d="M283.7 192.8L289.8 196.1" stroke-width="0.8"/>
<path d="M282.7 149.7L299.8 140.6" stroke-width="0.8"/>
<path d="M150.3 154.4L159.5 174.6" stroke-width="0.8"/>
<path d="M265.0 133.2L272.0 151.4" stroke-width="0.8"/>
<path d="M432.9 149.4L436.1 167.1" stroke-width="0.8"/>
<path d="M409.3 187.5L423.3 179.5" stroke-width="0.8"/>
<path d="M263.8 264.8L272.5 278.8" stroke-width="0.8"/>
<path d="M256.7 292.9L270.8 285.5" stroke-width="0.8"/>
<path d="M156.6 313.6L169.8 335.1" stroke-width="0.8"/>
<path d="M192.6 325.2L226.1 306.5" stroke-width="0.8"/>
<path d="M489.0 314.5L489.0 321.0L405.3 369.7L399.2 365.8" stroke-width="0.8"/>
<path d="M452.3 352.5L448.2 345.9" stroke-width="0.8"/>
<path d="M433.8 340.1L427.5 330.2" stroke-width="0.8"/>
<path d="M459.3 327.7L459.3 302.8" stroke-width="0.8"/>
<path d="M479.6 312.8L447.4 242.4" stroke-width="0.8"/>
<path d="M402.6 357.5L394.4 346.7" stroke-width="0.8"/>
<path d="M399.3 336.8L409.3 331.0L409.3 278.0" stroke-width="0.8"/>
<path d="M441.6 239.1L430.8 245.2" stroke-width="0.8"/>
<path d="M457.3 295.4L449.0 291.3L449.0 263.1L407.6 239.9" stroke-width="0.8"/>
<path d="M239.4 350.7L246.4 363.1" stroke-width="0.8"/>
<path d="M283.6 387.1L277.8 376.7" stroke-width="0.8"/>
<path d="M258.8 359.0L290.2 340.8L290.2 330.0" stroke-width="0.8"/>
<path d="M290.2 363.9L337.4 337.5" stroke-width="0.8"/>
<path d="M289.8 341.3L289.8 320.7L312.2 308.6" stroke-width="0.8"/>
<path d="M325.6 300.2L350.0 287.2" stroke-width="0.8"/>
<path d="M363.1 330.0L363.1 379.7L349.0 387.6" stroke-width="0.8"/>
<path d="M341.6 392.1L334.1 396.2" stroke-width="0.8"/>
<path d="M329.1 399.5L307.6 412.0" stroke-width="0.8"/>
<path d="M301.8 415.3L295.2 419.1" stroke-width="0.8"/>
<path d="M291.1 421.4L264.6 436.3L305.1 460.0" stroke-width="0.8"/>
<path d="M264.6 435.9L304.7 459.0" stroke-width="0.8"/>
<path d="M320.9 468.8L348.0 483.9" stroke-width="0.8"/>
<path d="M354.5 487.6L359.9 490.4" stroke-width="0.8"/>
<path d="M365.3 493.7L394.5 509.9" stroke-width="0.8"/>
<path d="M397.8 512.1L403.2 514.7" stroke-width="0.8"/>
<path d="M406.4 516.8L433.5 532.6L433.5 550.0" stroke-width="0.8"/>
<path d="M433.5 534.9L433.5 559.8L425.9 564.2" stroke-width="0.8"/>
<path d="M462.7 583.7L443.2 565.3" stroke-width="0.8"/>
<path d="M416.2 568.5L379.4 590.2" stroke-width="0.8"/>
<path d="M372.9 593.8L366.4 597.7" stroke-width="0.8"/>
<path d="M359.9 601.4L333.9 616.8" stroke-width="0.8"/>
<path d="M328.5 619.8L323.1 623.1" stroke-width="0.8"/>
<path d="M316.6 626.3L294.9 640.0" stroke-width="0.8"/>
<path d="M187.9 433.2L200.0 439.0" stroke-width="0.8"/>
<path d="M148.2 453.9L163.9 473.7" stroke-width="0.8"/>
<path d="M18.2 481.2L25.7 498.6" stroke-width="0.8"/>
<path d="M48.0 490.3L58.3 484.0L85.3 498.6" stroke-width="0.8"/>
<path d="M90.2 501.9L96.0 505.2" stroke-width="0.8"/>
<path d="M100.2 507.7L127.5 523.4" stroke-width="0.8"/>
<path d="M132.5 526.7L148.2 535.0L158.9 529.2" stroke-width="0.8"/>
<path d="M62.9 518.4L74.5 512.3L101.0 527.5" stroke-width="0.8"/>
<path d="M106.0 530.5L110.1 533.3" stroke-width="0.8"/>
<path d="M114.2 535.8L122.5 540.0" stroke-width="0.8"/>
<path d="M208.4 454.3L208.4 523.8" stroke-width="0.8"/>
<path d="M32.1 550.6L41.0 564.0" stroke-width="0.8"/>
<path d="M58.8 532.2L55.0 525.3" stroke-width="0.8"/>
<path d="M113.1 534.5L142.1 550.6L155.9 542.9" stroke-width="0.8"/>
<path d="M32.9 690.3L28.3 681.1" stroke-width="0.8"/>
<path d="M39.4 670.1L68.8 653.9" stroke-width="0.8"/>
<path d="M288.2 644.3L282.0 647.7" stroke-width="0.8"/>
<path d="M277.5 650.4L250.7 665.4" stroke-width="0.8"/>
<path d="M200.3 695.0L174.3 710.0" stroke-width="0.8"/>
<path d="M168.2 713.4L157.5 719.5" stroke-width="0.8"/>
<path d="M139.6 751.2L131.7 740.7" stroke-width="0.8"/>
<path d="M143.2 728.2L168.9 713.4" stroke-width="0.8"/>
<g transform="translate(151.3,184.2) rotate(-27.9)">
<path d="M3 -2.6L25.729537686339867 -2.6Q26.929537686339867 -2.6 26.929537686339867 -1.6L26.929537686339867 1.6Q26.929537686339867 2.6 25.729537686339867 2.6L3 2.6Z" fill="#fff"/>
<path d="M8.1 -2.3000000000000003L9.0 2.3000000000000003M9.8 -2.3000000000000003L10.7 2.3000000000000003M11.5 -2.3000000000000003L12.4 2.3000000000000003M13.2 -2.3000000000000003L14.1 2.3000000000000003M14.9 -2.3000000000000003L15.8 2.3000000000000003M16.6 -2.3000000000000003L17.5 2.3000000000000003M18.3 -2.3000000000000003L19.2 2.3000000000000003M20.0 -2.3000000000000003L20.9 2.3000000000000003M21.7 -2.3000000000000003L22.6 2.3000000000000003M23.4 -2.3000000000000003L24.3 2.3000000000000003M25.1 -2.3000000000000003L26.0 2.3000000000000003" stroke-width="0.6"/>
<ellipse cx="2.6" cy="0" rx="2.6" ry="6.4" fill="#fff"/>
<ellipse cx="-0.3" cy="0" rx="3.4" ry="5.0" fill="#fff"/>
<path d="M-2.6 -2.6L-0.2 -3.4L1.8 -1.6L1.8 2L-0.2 3.6L-2.6 2.6Z" stroke-width="0.6" fill="none"/>
</g>
<g transform="translate(265.5,159.7) rotate(-28.1)">
<path d="M3 -2.6L17.052944967867532 -2.6Q18.25294496786753 -2.6 18.25294496786753 -1.6L18.25294496786753 1.6Q18.25294496786753 2.6 17.052944967867532 2.6L3 2.6Z" fill="#fff"/>
<path d="M7.3 -2.3000000000000003L8.2 2.3000000000000003M9.0 -2.3000000000000003L9.9 2.3000000000000003M10.7 -2.3000000000000003L11.6 2.3000000000000003M12.4 -2.3000000000000003L13.3 2.3000000000000003M14.1 -2.3000000000000003L15.0 2.3000000000000003M15.8 -2.3000000000000003L16.7 2.3000000000000003" stroke-width="0.6"/>
<ellipse cx="2.6" cy="0" rx="2.6" ry="6.4" fill="#fff"/>
<ellipse cx="-0.3" cy="0" rx="3.4" ry="5.0" fill="#fff"/>
<path d="M-2.6 -2.6L-0.2 -3.4L1.8 -1.6L1.8 2L-0.2 3.6L-2.6 2.6Z" stroke-width="0.6" fill="none"/>
</g>
<g transform="translate(163.2,343.9) rotate(-31.2)">
<path d="M3 -2.6L31.642198464780055 -2.6Q32.842198464780054 -2.6 32.842198464780054 -1.6L32.842198464780054 1.6Q32.842198464780054 2.6 31.642198464780055 2.6L3 2.6Z" fill="#fff"/>
<path d="M14.8 -2.3000000000000003L15.7 2.3000000000000003M16.5 -2.3000000000000003L17.4 2.3000000000000003M18.2 -2.3000000000000003L19.1 2.3000000000000003M19.9 -2.3000000000000003L20.8 2.3000000000000003M21.6 -2.3000000000000003L22.5 2.3000000000000003M23.3 -2.3000000000000003L24.2 2.3000000000000003M25.0 -2.3000000000000003L25.9 2.3000000000000003M26.7 -2.3000000000000003L27.6 2.3000000000000003M28.4 -2.3000000000000003L29.3 2.3000000000000003M30.1 -2.3000000000000003L31.0 2.3000000000000003M31.8 -2.3000000000000003L32.7 2.3000000000000003" stroke-width="0.6"/>
<ellipse cx="2.6" cy="0" rx="2.6" ry="6.4" fill="#fff"/>
<ellipse cx="-0.3" cy="0" rx="3.4" ry="5.0" fill="#fff"/>
<path d="M-2.6 -2.6L-0.2 -3.4L1.8 -1.6L1.8 2L-0.2 3.6L-2.6 2.6Z" stroke-width="0.6" fill="none"/>
</g>
<g transform="translate(241.4,369.4) rotate(-30.6)">
<path d="M3 -2.6L17.047739586041875 -2.6Q18.247739586041874 -2.6 18.247739586041874 -1.6L18.247739586041874 1.6Q18.247739586041874 2.6 17.047739586041875 2.6L3 2.6Z" fill="#fff"/>
<path d="M8.2 -2.3000000000000003L9.1 2.3000000000000003M9.9 -2.3000000000000003L10.8 2.3000000000000003M11.6 -2.3000000000000003L12.5 2.3000000000000003M13.3 -2.3000000000000003L14.2 2.3000000000000003M15.0 -2.3000000000000003L15.9 2.3000000000000003M16.7 -2.3000000000000003L17.6 2.3000000000000003" stroke-width="0.6"/>
<ellipse cx="2.6" cy="0" rx="2.6" ry="6.4" fill="#fff"/>
<ellipse cx="-0.3" cy="0" rx="3.4" ry="5.0" fill="#fff"/>
<path d="M-2.6 -2.6L-0.2 -3.4L1.8 -1.6L1.8 2L-0.2 3.6L-2.6 2.6Z" stroke-width="0.6" fill="none"/>
</g>
<g transform="translate(267,376.7) rotate(-28.9)">
<path d="M3 -2.6L23.461102976144446 -2.6Q24.661102976144445 -2.6 24.661102976144445 -1.6L24.661102976144445 1.6Q24.661102976144445 2.6 23.461102976144446 2.6L3 2.6Z" fill="#fff"/>
<path d="M11.1 -2.3000000000000003L12.0 2.3000000000000003M12.8 -2.3000000000000003L13.7 2.3000000000000003M14.5 -2.3000000000000003L15.4 2.3000000000000003M16.2 -2.3000000000000003L17.1 2.3000000000000003M17.9 -2.3000000000000003L18.8 2.3000000000000003M19.6 -2.3000000000000003L20.5 2.3000000000000003M21.3 -2.3000000000000003L22.2 2.3000000000000003M23.0 -2.3000000000000003L23.9 2.3000000000000003" stroke-width="0.6"/>
<ellipse cx="2.6" cy="0" rx="2.6" ry="6.4" fill="#fff"/>
<ellipse cx="-0.3" cy="0" rx="3.4" ry="5.0" fill="#fff"/>
<path d="M-2.6 -2.6L-0.2 -3.4L1.8 -1.6L1.8 2L-0.2 3.6L-2.6 2.6Z" stroke-width="0.6" fill="none"/>
</g>
<g transform="translate(12.9,511) rotate(-30.1)">
<path d="M3 -2.6L38.454760117796695 -2.6Q39.6547601177967 -2.6 39.6547601177967 -1.6L39.6547601177967 1.6Q39.6547601177967 2.6 38.454760117796695 2.6L3 2.6Z" fill="#fff"/>
<path d="M33.7 -2.3000000000000003L34.6 2.3000000000000003M35.4 -2.3000000000000003L36.3 2.3000000000000003M37.1 -2.3000000000000003L38.0 2.3000000000000003" stroke-width="0.6"/>
<ellipse cx="2.6" cy="0" rx="2.6" ry="6.4" fill="#fff"/>
<ellipse cx="-0.3" cy="0" rx="3.4" ry="5.0" fill="#fff"/>
<path d="M-2.6 -2.6L-0.2 -3.4L1.8 -1.6L1.8 2L-0.2 3.6L-2.6 2.6Z" stroke-width="0.6" fill="none"/>
</g>
<g transform="translate(20.2,680.8) rotate(-28.1)">
<path d="M3 -2.6L17.499999999999982 -2.6Q18.69999999999998 -2.6 18.69999999999998 -1.6L18.69999999999998 1.6Q18.69999999999998 2.6 17.499999999999982 2.6L3 2.6Z" fill="#fff"/>
<path d="M9.3 -2.3000000000000003L10.2 2.3000000000000003M11.0 -2.3000000000000003L11.9 2.3000000000000003M12.7 -2.3000000000000003L13.6 2.3000000000000003M14.4 -2.3000000000000003L15.3 2.3000000000000003M16.1 -2.3000000000000003L17.0 2.3000000000000003" stroke-width="0.6"/>
<ellipse cx="2.6" cy="0" rx="2.6" ry="6.4" fill="#fff"/>
<ellipse cx="-0.3" cy="0" rx="3.4" ry="5.0" fill="#fff"/>
<path d="M-2.6 -2.6L-0.2 -3.4L1.8 -1.6L1.8 2L-0.2 3.6L-2.6 2.6Z" stroke-width="0.6" fill="none"/>
</g>
<g transform="translate(120.8,741.1) rotate(-29.1)">
<path d="M3 -2.6L23.286118516416586 -2.6Q24.486118516416585 -2.6 24.486118516416585 -1.6L24.486118516416585 1.6Q24.486118516416585 2.6 23.286118516416586 2.6L3 2.6Z" fill="#fff"/>
<path d="M11.0 -2.3000000000000003L11.9 2.3000000000000003M12.7 -2.3000000000000003L13.6 2.3000000000000003M14.4 -2.3000000000000003L15.3 2.3000000000000003M16.1 -2.3000000000000003L17.0 2.3000000000000003M17.8 -2.3000000000000003L18.7 2.3000000000000003M19.5 -2.3000000000000003L20.4 2.3000000000000003M21.2 -2.3000000000000003L22.1 2.3000000000000003M22.9 -2.3000000000000003L23.8 2.3000000000000003" stroke-width="0.6"/>
<ellipse cx="2.6" cy="0" rx="2.6" ry="6.4" fill="#fff"/>
<ellipse cx="-0.3" cy="0" rx="3.4" ry="5.0" fill="#fff"/>
<path d="M-2.6 -2.6L-0.2 -3.4L1.8 -1.6L1.8 2L-0.2 3.6L-2.6 2.6Z" stroke-width="0.6" fill="none"/>
</g>
<rect x="138" y="138" width="13" height="13" fill="#ffff00" stroke="none"/>
<text x="138.72" y="148.60" font-size="10.4" fill="#1c1c1c" stroke="none">11</text>
<rect x="254" y="118" width="15" height="13" fill="#ffff00" stroke="none"/>
<text x="255.72" y="128.60" font-size="10.4" fill="#1c1c1c" stroke="none">10</text>
<rect x="427" y="132" width="9" height="13" fill="#ffff00" stroke="none"/>
<text x="428.61" y="142.60" font-size="10.4" fill="#1c1c1c" stroke="none">9</text>
<rect x="253" y="251" width="15" height="13" fill="#ffff00" stroke="none"/>
<text x="254.72" y="261.60" font-size="10.4" fill="#1c1c1c" stroke="none">13</text>
<rect x="144" y="298" width="15" height="13" fill="#ffff00" stroke="none"/>
<text x="145.72" y="308.60" font-size="10.4" fill="#1c1c1c" stroke="none">12</text>
<rect x="226" y="338" width="14" height="12.5" fill="#ffff00" stroke="none"/>
<text x="227.22" y="348.10" font-size="10.4" fill="#1c1c1c" stroke="none">14</text>
<rect x="279" y="389" width="15" height="12.5" fill="#ffff00" stroke="none"/>
<text x="280.72" y="399.10" font-size="10.4" fill="#1c1c1c" stroke="none">15</text>
<rect x="452" y="349" width="8" height="13" fill="#ff8080" stroke="none"/>
<text x="453.11" y="359.60" font-size="10.4" fill="#1c1c1c" stroke="none">1</text>
<rect x="171" y="421" width="16" height="12.5" fill="#ffff00" stroke="none"/>
<text x="173.22" y="431.10" font-size="10.4" fill="#1c1c1c" stroke="none">20</text>
<rect x="138" y="442" width="10" height="12.5" fill="#ffff00" stroke="none"/>
<text x="140.11" y="452.10" font-size="10.4" fill="#1c1c1c" stroke="none">8</text>
<rect x="6" y="465" width="15" height="12.5" fill="#ffff00" stroke="none"/>
<text x="7.72" y="475.10" font-size="10.4" fill="#1c1c1c" stroke="none">19</text>
<rect x="22" y="536" width="10" height="12.5" fill="#ffff00" stroke="none"/>
<text x="24.11" y="546.10" font-size="10.4" fill="#1c1c1c" stroke="none">7</text>
<rect x="57" y="536" width="15" height="12.5" fill="#ffff00" stroke="none"/>
<text x="58.72" y="546.10" font-size="10.4" fill="#1c1c1c" stroke="none">18</text>
<rect x="465" y="586" width="10" height="12.5" fill="#ffff00" stroke="none"/>
<text x="467.11" y="596.10" font-size="10.4" fill="#1c1c1c" stroke="none">6</text>
<rect x="31" y="691" width="14" height="12.5" fill="#ffff00" stroke="none"/>
<text x="32.22" y="701.10" font-size="10.4" fill="#1c1c1c" stroke="none">17</text>
<rect x="139" y="752" width="15" height="12.5" fill="#ffff00" stroke="none"/>
<text x="140.72" y="762.10" font-size="10.4" fill="#1c1c1c" stroke="none">16</text>
<text x="480.22" y="322.00" font-size="10" fill="#2a2a2a" stroke="none">5</text>
<text x="456.22" y="337.00" font-size="10" fill="#2a2a2a" stroke="none">4</text>
<text x="433.22" y="348.50" font-size="10" fill="#2a2a2a" stroke="none">2</text>
<text x="402.72" y="366.00" font-size="10" fill="#2a2a2a" stroke="none">3</text>
</svg></div>
<div class="toolbar"><div class="tbin"><svg width="36" height="161" viewBox="5 25 36 161">
<defs><linearGradient id="g-btn" x1="0" y1="0" x2="0" y2="1"><stop offset="0" stop-color="#f4f4f4"/><stop offset="0.5" stop-color="#e2e2e2"/><stop offset="0.5" stop-color="#d4d4d4"/><stop offset="1" stop-color="#e6e6e6"/></linearGradient>
<linearGradient id="g-fade" x1="0" y1="0" x2="1" y2="0"><stop offset="0" stop-color="#ececec"/><stop offset="1" stop-color="#ececec" stop-opacity="0"/></linearGradient></defs>
<!-- plus -->
<path d="M16 34h14.5v5l2 2.5l-2 2.5v5h-14.5z" fill="url(#g-btn)" stroke="#c4c4c4" stroke-width="0.8"/>
<path d="M18.5 41.5h10M23.5 36.5v10" stroke="#505050" stroke-width="2" fill="none"/>
<!-- minus -->
<path d="M30.5 57h-14.5v5l-2.3 2.5l2.3 2.5v5h14.5z" fill="url(#g-btn)" stroke="#c4c4c4" stroke-width="0.8"/>
<path d="M18.3 64.5h10" stroke="#505050" stroke-width="2" fill="none"/>
<!-- grid -->
<rect x="16" y="86" width="14.5" height="14.5" fill="url(#g-btn)" stroke="#c4c4c4" stroke-width="0.8"/>
<g fill="#8a8a8a" stroke="#6a6a6a" stroke-width="0.6"><rect x="17.6" y="87.6" width="3.6" height="3.6"/><rect x="25.4" y="87.6" width="3.6" height="3.6"/><rect x="17.6" y="95.4" width="3.6" height="3.6"/><rect x="25.4" y="95.4" width="3.6" height="3.6"/></g>
<!-- square -->
<rect x="16" y="108.5" width="14.5" height="14.5" fill="url(#g-btn)" stroke="#c4c4c4" stroke-width="0.8"/>
<rect x="19.5" y="112.5" width="7.2" height="7.2" fill="#d6d6d6" stroke="#5e5e5e" stroke-width="1"/>
<!-- export -->
<rect x="19.5" y="161.5" width="13" height="15" fill="url(#g-fade)"/>
<g fill="#e4e4e4" stroke="#bdbdbd" stroke-width="0.7"><rect x="14.6" y="161.8" width="4.4" height="4.2"/><rect x="14.6" y="166.9" width="4.4" height="4.2"/><rect x="14.6" y="172" width="4.4" height="4.2"/></g>
<path d="M22.3 169h6" stroke="#404040" stroke-width="1.6"/><path d="M27 165.8l4.2 3.2l-4.2 3.2z" fill="#404040"/>
</svg>
</div></div>
<div class="right"></div>
<div class="th" style="left:502px;width:79px"><svg class="hicon" width="18" height="18" viewBox="0 0 18 18"><use href="#i-find"/></svg></div>
<div class="th" style="left:582px;width:83px"><span style="transform:scaleX(0.946)">Symbol(s)</span></div>
<div class="th" style="left:666px;width:34px"><span style="transform:scaleX(0.99)">Item</span></div>
<div class="th" style="left:701px;width:83px"><span style="transform:scaleX(0.976)">Parts No.</span></div>
<div class="th" style="left:785px;width:34px"><span style="transform:scaleX(1.005)">Qty.</span></div>
<div class="th" style="left:820px;width:83px"><span style="transform:scaleX(0.976)">Latest Part No.</span></div>
<div class="th" style="left:904px;width:134px"><span style="transform:scaleX(1.034)">Description</span></div>
<div class="th" style="left:1039px;width:54px"><span style="transform:scaleX(1.026)">Cut Out</span></div>
<div class="th" style="left:1094px;width:51px"><span style="transform:scaleX(1.031)">Cut In</span></div>
<div class="th" style="left:1146px;width:70px"><span style="transform:scaleX(0.98)">Comment</span></div>
<div class="tr sel" style="top:41px">
<div class="td" style="left:0px;width:79px"><svg class="ic" style="left:4px;top:2px" width="16" height="16" viewBox="0 0 16 16"><use href="#i-gears"/></svg><svg class="ic" style="left:21px;top:1px" width="17.2" height="15" viewBox="0 0 18 16" preserveAspectRatio="none"><use href="#i-cart-sel"/></svg><svg class="ic" style="left:40px;top:2px" width="14" height="14" viewBox="0 0 14 14"><use href="#i-info"/></svg></div>
<div class="td" style="left:80px;width:83px"></div>
<div class="td" style="left:164px;width:34px"><span style="transform:scaleX(0.97)">1</span></div>
<div class="td" style="left:199px;width:83px"><span style="transform:scaleX(0.972)">T412962</span></div>
<div class="td" style="left:283px;width:34px"><span style="transform:scaleX(0.97)">1</span></div>
<div class="td" style="left:318px;width:83px"><span style="transform:scaleX(0.972)">T412962</span></div>
<div class="td" style="left:402px;width:134px"><span style="transform:scaleX(0.931)">TIMING CASE</span></div>
<div class="td" style="left:537px;width:54px"><span style="transform:scaleX(0.97)"></span></div>
<div class="td" style="left:592px;width:51px"><span style="transform:scaleX(0.97)"></span></div>
<div class="td" style="left:644px;width:70px"><span style="transform:scaleX(0.97)"></span></div>
</div>
<div class="tr" style="top:61px">
<div class="td" style="left:0px;width:79px"><svg class="ic" style="left:5.7px;top:3.6px" width="10.6" height="10.6" viewBox="0 0 12 12"><use href="#i-gear"/></svg><svg class="ic" style="left:21px;top:1px" width="17.2" height="15" viewBox="0 0 18 16" preserveAspectRatio="none"><use href="#i-cart"/></svg><svg class="ic" style="left:40px;top:2px" width="14" height="14" viewBox="0 0 14 14"><use href="#i-info"/></svg></div>
<div class="td" style="left:80px;width:83px"></div>
<div class="td" style="left:164px;width:34px"><span style="transform:scaleX(0.97)">6</span></div>
<div class="td" style="left:199px;width:83px"><span style="transform:scaleX(0.97)">T411957</span></div>
<div class="td" style="left:283px;width:34px"><span style="transform:scaleX(0.97)">1</span></div>
<div class="td" style="left:318px;width:83px"><span style="transform:scaleX(0.97)">T411957</span></div>
<div class="td" style="left:402px;width:134px"><span style="transform:scaleX(0.937)">GASKET - TIMING COVER</span></div>
<div class="td" style="left:537px;width:54px"><span style="transform:scaleX(0.97)"></span></div>
<div class="td" style="left:592px;width:51px"><span style="transform:scaleX(0.97)"></span></div>
<div class="td" style="left:644px;width:70px"><span style="transform:scaleX(0.97)"></span></div>
</div>
<div class="tr" style="top:81px">
<div class="td" style="left:0px;width:79px"><svg class="ic" style="left:5.7px;top:3.6px" width="10.6" height="10.6" viewBox="0 0 12 12"><use href="#i-gear"/></svg><svg class="ic" style="left:21px;top:1px" width="17.2" height="15" viewBox="0 0 18 16" preserveAspectRatio="none"><use href="#i-cart"/></svg><svg class="ic" style="left:40px;top:2px" width="14" height="14" viewBox="0 0 14 14"><use href="#i-info"/></svg></div>
<div class="td" style="left:80px;width:83px"></div>
<div class="td" style="left:164px;width:34px"><span style="transform:scaleX(0.97)">7</span></div>
<div class="td" style="left:199px;width:83px"><span style="transform:scaleX(0.97)">T411876</span></div>
<div class="td" style="left:283px;width:34px"><span style="transform:scaleX(0.97)">1</span></div>
<div class="td" style="left:318px;width:83px"><span style="transform:scaleX(0.97)">T411876</span></div>
<div class="td" style="left:402px;width:134px"><span style="transform:scaleX(0.954)">TIMING COVER</span></div>
<div class="td" style="left:537px;width:54px"><span style="transform:scaleX(0.97)"></span></div>
<div class="td" style="left:592px;width:51px"><span style="transform:scaleX(0.97)"></span></div>
<div class="td" style="left:644px;width:70px"><span style="transform:scaleX(0.97)"></span></div>
</div>
<div class="tr" style="top:101px">
<div class="td" style="left:0px;width:79px"><svg class="ic" style="left:5.7px;top:3.6px" width="10.6" height="10.6" viewBox="0 0 12 12"><use href="#i-gear"/></svg><svg class="ic" style="left:21px;top:1px" width="17.2" height="15" viewBox="0 0 18 16" preserveAspectRatio="none"><use href="#i-cart"/></svg><svg class="ic" style="left:40px;top:2px" width="14" height="14" viewBox="0 0 14 14"><use href="#i-info"/></svg></div>
<div class="td" style="left:80px;width:83px"></div>
<div class="td" style="left:164px;width:34px"><span style="transform:scaleX(0.97)">8</span></div>
<div class="td" style="left:199px;width:83px"><span style="transform:scaleX(0.97)">T411915</span></div>
<div class="td" style="left:283px;width:34px"><span style="transform:scaleX(0.97)">1</span></div>
<div class="td" style="left:318px;width:83px"><span style="transform:scaleX(0.97)">T411915</span></div>
<div class="td" style="left:402px;width:134px"><span style="transform:scaleX(0.912)">RELIEF VALVE</span></div>
<div class="td" style="left:537px;width:54px"><span style="transform:scaleX(0.97)"></span></div>
<div class="td" style="left:592px;width:51px"><span style="transform:scaleX(0.97)"></span></div>
<div class="td" style="left:644px;width:70px"><span style="transform:scaleX(0.97)"></span></div>
</div>
<div class="tr" style="top:121px">
<div class="td" style="left:0px;width:79px"><svg class="ic" style="left:5.7px;top:3.6px" width="10.6" height="10.6" viewBox="0 0 12 12"><use href="#i-gear"/></svg><svg class="ic" style="left:21px;top:1px" width="17.2" height="15" viewBox="0 0 18 16" preserveAspectRatio="none"><use href="#i-cart"/></svg><svg class="ic" style="left:40px;top:2px" width="14" height="14" viewBox="0 0 14 14"><use href="#i-info"/></svg></div>
<div class="td" style="left:80px;width:83px"></div>
<div class="td" style="left:164px;width:34px"><span style="transform:scaleX(0.97)">9</span></div>
<div class="td" style="left:199px;width:83px"><span style="transform:scaleX(0.97)">2313C062</span></div>
<div class="td" style="left:283px;width:34px"><span style="transform:scaleX(0.97)">3</span></div>
<div class="td" style="left:318px;width:83px"><span style="transform:scaleX(0.97)">2313C062</span></div>
<div class="td" style="left:402px;width:134px"><span style="transform:scaleX(0.928)">STUD</span></div>
<div class="td" style="left:537px;width:54px"><span style="transform:scaleX(0.97)"></span></div>
<div class="td" style="left:592px;width:51px"><span style="transform:scaleX(0.97)"></span></div>
<div class="td" style="left:644px;width:70px"><span style="transform:scaleX(0.97)"></span></div>
</div>
<div class="tr" style="top:141px">
<div class="td" style="left:0px;width:79px"><svg class="ic" style="left:5.7px;top:3.6px" width="10.6" height="10.6" viewBox="0 0 12 12"><use href="#i-gear"/></svg><svg class="ic" style="left:21px;top:1px" width="17.2" height="15" viewBox="0 0 18 16" preserveAspectRatio="none"><use href="#i-cart"/></svg><svg class="ic" style="left:40px;top:2px" width="14" height="14" viewBox="0 0 14 14"><use href="#i-info"/></svg></div>
<div class="td" style="left:80px;width:83px"></div>
<div class="td" style="left:164px;width:34px"><span style="transform:scaleX(0.97)">10</span></div>
<div class="td" style="left:199px;width:83px"><span style="transform:scaleX(0.97)">T412343</span></div>
<div class="td" style="left:283px;width:34px"><span style="transform:scaleX(0.97)">1</span></div>
<div class="td" style="left:318px;width:83px"><span style="transform:scaleX(0.97)">T412343</span></div>
<div class="td" style="left:402px;width:134px"><span style="transform:scaleX(0.907)">SCREW</span></div>
<div class="td" style="left:537px;width:54px"><span style="transform:scaleX(0.97)"></span></div>
<div class="td" style="left:592px;width:51px"><span style="transform:scaleX(0.97)"></span></div>
<div class="td" style="left:644px;width:70px"><span style="transform:scaleX(0.97)"></span></div>
</div>
<div class="tr" style="top:161px">
<div class="td" style="left:0px;width:79px"><svg class="ic" style="left:5.7px;top:3.6px" width="10.6" height="10.6" viewBox="0 0 12 12"><use href="#i-gear"/></svg><svg class="ic" style="left:21px;top:1px" width="17.2" height="15" viewBox="0 0 18 16" preserveAspectRatio="none"><use href="#i-cart"/></svg><svg class="ic" style="left:40px;top:2px" width="14" height="14" viewBox="0 0 14 14"><use href="#i-info"/></svg></div>
<div class="td" style="left:80px;width:83px"></div>
<div class="td" style="left:164px;width:34px"><span style="transform:scaleX(0.97)">11</span></div>
<div class="td" style="left:199px;width:83px"><span style="transform:scaleX(0.97)">2314H007</span></div>
<div class="td" style="left:283px;width:34px"><span style="transform:scaleX(0.97)">1</span></div>
<div class="td" style="left:318px;width:83px"><span style="transform:scaleX(0.97)">2314H007</span></div>
<div class="td" style="left:402px;width:134px"><span style="transform:scaleX(0.907)">SCREW</span></div>
<div class="td" style="left:537px;width:54px"><span style="transform:scaleX(0.97)"></span></div>
<div class="td" style="left:592px;width:51px"><span style="transform:scaleX(0.97)"></span></div>
<div class="td" style="left:644px;width:70px"><span style="transform:scaleX(0.97)"></span></div>
</div>
<div class="tr" style="top:181px">
<div class="td" style="left:0px;width:79px"><svg class="ic" style="left:5.7px;top:3.6px" width="10.6" height="10.6" viewBox="0 0 12 12"><use href="#i-gear"/></svg><svg class="ic" style="left:21px;top:1px" width="17.2" height="15" viewBox="0 0 18 16" preserveAspectRatio="none"><use href="#i-cart"/></svg><svg class="ic" style="left:40px;top:2px" width="14" height="14" viewBox="0 0 14 14"><use href="#i-info"/></svg></div>
<div class="td" style="left:80px;width:83px"></div>
<div class="td" style="left:164px;width:34px"><span style="transform:scaleX(0.97)">12</span></div>
<div class="td" style="left:199px;width:83px"><span style="transform:scaleX(0.97)">T412253</span></div>
<div class="td" style="left:283px;width:34px"><span style="transform:scaleX(0.97)">7</span></div>
<div class="td" style="left:318px;width:83px"><span style="transform:scaleX(0.97)">T412253</span></div>
<div class="td" style="left:402px;width:134px"><span style="transform:scaleX(0.915)">BOLT</span></div>
<div class="td" style="left:537px;width:54px"><span style="transform:scaleX(0.97)"></span></div>
<div class="td" style="left:592px;width:51px"><span style="transform:scaleX(0.97)"></span></div>
<div class="td" style="left:644px;width:70px"><span style="transform:scaleX(0.97)"></span></div>
</div>
<div class="tr" style="top:201px">
<div class="td" style="left:0px;width:79px"><svg class="ic" style="left:5.7px;top:3.6px" width="10.6" height="10.6" viewBox="0 0 12 12"><use href="#i-gear"/></svg><svg class="ic" style="left:21px;top:1px" width="17.2" height="15" viewBox="0 0 18 16" preserveAspectRatio="none"><use href="#i-cart"/></svg><svg class="ic" style="left:40px;top:2px" width="14" height="14" viewBox="0 0 14 14"><use href="#i-info"/></svg></div>
<div class="td" style="left:80px;width:83px"></div>
<div class="td" style="left:164px;width:34px"><span style="transform:scaleX(0.97)">13</span></div>
<div class="td" style="left:199px;width:83px"><span style="transform:scaleX(0.97)">T411791</span></div>
<div class="td" style="left:283px;width:34px"><span style="transform:scaleX(0.97)">2</span></div>
<div class="td" style="left:318px;width:83px"><span style="transform:scaleX(0.97)">T411791</span></div>
<div class="td" style="left:402px;width:134px"><span style="transform:scaleX(0.925)">DOWEL</span></div>
<div class="td" style="left:537px;width:54px"><span style="transform:scaleX(0.97)"></span></div>
<div class="td" style="left:592px;width:51px"><span style="transform:scaleX(0.97)"></span></div>
<div class="td" style="left:644px;width:70px"><span style="transform:scaleX(0.97)"></span></div>
</div>
<div class="tr" style="top:221px">
<div class="td" style="left:0px;width:79px"><svg class="ic" style="left:5.7px;top:3.6px" width="10.6" height="10.6" viewBox="0 0 12 12"><use href="#i-gear"/></svg><svg class="ic" style="left:21px;top:1px" width="17.2" height="15" viewBox="0 0 18 16" preserveAspectRatio="none"><use href="#i-cart"/></svg><svg class="ic" style="left:40px;top:2px" width="14" height="14" viewBox="0 0 14 14"><use href="#i-info"/></svg></div>
<div class="td" style="left:80px;width:83px"></div>
<div class="td" style="left:164px;width:34px"><span style="transform:scaleX(0.97)">14</span></div>
<div class="td" style="left:199px;width:83px"><span style="transform:scaleX(0.97)">T412489</span></div>
<div class="td" style="left:283px;width:34px"><span style="transform:scaleX(0.97)">3</span></div>
<div class="td" style="left:318px;width:83px"><span style="transform:scaleX(0.97)">T412489</span></div>
<div class="td" style="left:402px;width:134px"><span style="transform:scaleX(0.907)">SCREW</span></div>
<div class="td" style="left:537px;width:54px"><span style="transform:scaleX(0.97)"></span></div>
<div class="td" style="left:592px;width:51px"><span style="transform:scaleX(0.97)"></span></div>
<div class="td" style="left:644px;width:70px"><span style="transform:scaleX(0.97)"></span></div>
</div>
<div class="tr" style="top:241px">
<div class="td" style="left:0px;width:79px"><svg class="ic" style="left:5.7px;top:3.6px" width="10.6" height="10.6" viewBox="0 0 12 12"><use href="#i-gear"/></svg><svg class="ic" style="left:21px;top:1px" width="17.2" height="15" viewBox="0 0 18 16" preserveAspectRatio="none"><use href="#i-cart"/></svg><svg class="ic" style="left:41.5px;top:1px" width="11" height="17" viewBox="0 0 11 17"><use href="#i-book"/></svg><svg class="ic" style="left:58px;top:2px" width="14" height="14" viewBox="0 0 14 14"><use href="#i-info"/></svg></div>
<div class="td" style="left:80px;width:83px"></div>
<div class="td" style="left:164px;width:34px"><span style="transform:scaleX(0.97)">15</span></div>
<div class="td" style="left:199px;width:83px"><span style="transform:scaleX(0.982)">2314H006</span></div>
<div class="td" style="left:283px;width:34px"><span style="transform:scaleX(0.97)">2</span></div>
<div class="td" style="left:318px;width:83px"><span style="transform:scaleX(0.982)">2314H006</span></div>
<div class="td" style="left:402px;width:134px"><span style="transform:scaleX(0.915)">BOLT</span></div>
<div class="td" style="left:537px;width:54px"><span style="transform:scaleX(0.97)"></span></div>
<div class="td" style="left:592px;width:51px"><span style="transform:scaleX(0.97)"></span></div>
<div class="td" style="left:644px;width:70px"><span style="transform:scaleX(0.97)"></span></div>
</div>
<div class="tr" style="top:261px">
<div class="td" style="left:0px;width:79px"><svg class="ic" style="left:5.7px;top:3.6px" width="10.6" height="10.6" viewBox="0 0 12 12"><use href="#i-gear"/></svg><svg class="ic" style="left:21px;top:1px" width="17.2" height="15" viewBox="0 0 18 16" preserveAspectRatio="none"><use href="#i-cart"/></svg><svg class="ic" style="left:41.5px;top:1px" width="11" height="17" viewBox="0 0 11 17"><use href="#i-book"/></svg><svg class="ic" style="left:58px;top:2px" width="14" height="14" viewBox="0 0 14 14"><use href="#i-info"/></svg></div>
<div class="td" style="left:80px;width:83px"></div>
<div class="td" style="left:164px;width:34px"><span style="transform:scaleX(0.97)">16</span></div>
<div class="td" style="left:199px;width:83px"><span style="transform:scaleX(0.982)">2314H006</span></div>
<div class="td" style="left:283px;width:34px"><span style="transform:scaleX(0.97)">12</span></div>
<div class="td" style="left:318px;width:83px"><span style="transform:scaleX(0.982)">2314H006</span></div>
<div class="td" style="left:402px;width:134px"><span style="transform:scaleX(0.915)">BOLT</span></div>
<div class="td" style="left:537px;width:54px"><span style="transform:scaleX(0.97)"></span></div>
<div class="td" style="left:592px;width:51px"><span style="transform:scaleX(0.97)"></span></div>
<div class="td" style="left:644px;width:70px"><span style="transform:scaleX(0.97)"></span></div>
</div>
<div class="tr" style="top:281px">
<div class="td" style="left:0px;width:79px"><svg class="ic" style="left:5.7px;top:3.6px" width="10.6" height="10.6" viewBox="0 0 12 12"><use href="#i-gear"/></svg><svg class="ic" style="left:21px;top:1px" width="17.2" height="15" viewBox="0 0 18 16" preserveAspectRatio="none"><use href="#i-cart"/></svg><svg class="ic" style="left:40px;top:2px" width="14" height="14" viewBox="0 0 14 14"><use href="#i-info"/></svg></div>
<div class="td" style="left:80px;width:83px"></div>
<div class="td" style="left:164px;width:34px"><span style="transform:scaleX(0.97)">17</span></div>
<div class="td" style="left:199px;width:83px"><span style="transform:scaleX(0.97)">T412343</span></div>
<div class="td" style="left:283px;width:34px"><span style="transform:scaleX(0.97)">3</span></div>
<div class="td" style="left:318px;width:83px"><span style="transform:scaleX(0.97)">T412343</span></div>
<div class="td" style="left:402px;width:134px"><span style="transform:scaleX(0.907)">SCREW</span></div>
<div class="td" style="left:537px;width:54px"><span style="transform:scaleX(0.97)"></span></div>
<div class="td" style="left:592px;width:51px"><span style="transform:scaleX(0.97)"></span></div>
<div class="td" style="left:644px;width:70px"><span style="transform:scaleX(0.97)"></span></div>
</div>
<div class="tr" style="top:301px">
<div class="td" style="left:0px;width:79px"><svg class="ic" style="left:5.7px;top:3.6px" width="10.6" height="10.6" viewBox="0 0 12 12"><use href="#i-gear"/></svg><svg class="ic" style="left:21px;top:1px" width="17.2" height="15" viewBox="0 0 18 16" preserveAspectRatio="none"><use href="#i-cart"/></svg><svg class="ic" style="left:40px;top:2px" width="14" height="14" viewBox="0 0 14 14"><use href="#i-info"/></svg></div>
<div class="td" style="left:80px;width:83px"></div>
<div class="td" style="left:164px;width:34px"><span style="transform:scaleX(0.97)">18</span></div>
<div class="td" style="left:199px;width:83px"><span style="transform:scaleX(0.962)">2313C041</span></div>
<div class="td" style="left:283px;width:34px"><span style="transform:scaleX(0.97)">3</span></div>
<div class="td" style="left:318px;width:83px"><span style="transform:scaleX(0.962)">2313C041</span></div>
<div class="td" style="left:402px;width:134px"><span style="transform:scaleX(0.928)">STUD</span></div>
<div class="td" style="left:537px;width:54px"><span style="transform:scaleX(0.97)"></span></div>
<div class="td" style="left:592px;width:51px"><span style="transform:scaleX(0.97)"></span></div>
<div class="td" style="left:644px;width:70px"><span style="transform:scaleX(0.97)"></span></div>
</div>
<div class="tr" style="top:321px">
<div class="td" style="left:0px;width:79px"><svg class="ic" style="left:5.7px;top:3.6px" width="10.6" height="10.6" viewBox="0 0 12 12"><use href="#i-gear"/></svg><svg class="ic" style="left:21px;top:1px" width="17.2" height="15" viewBox="0 0 18 16" preserveAspectRatio="none"><use href="#i-cart"/></svg><svg class="ic" style="left:40px;top:2px" width="14" height="14" viewBox="0 0 14 14"><use href="#i-s"/></svg><svg class="ic" style="left:58px;top:2px" width="14" height="14" viewBox="0 0 14 14"><use href="#i-info"/></svg></div>
<div class="td" style="left:80px;width:83px"><svg class="ic" style="left:5px;top:3px" width="12" height="12" viewBox="0 0 12 12"><use href="#i-x"/></svg></div>
<div class="td" style="left:164px;width:34px"><span style="transform:scaleX(0.97)">19</span></div>
<div class="td" style="left:199px;width:83px"><span style="transform:scaleX(0.998)">2314H011</span></div>
<div class="td" style="left:283px;width:34px"><span style="transform:scaleX(0.97)">1</span></div>
<div class="td" style="left:318px;width:83px"><span style="transform:scaleX(0.938)">2314K161</span></div>
<div class="td" style="left:402px;width:134px"><span style="transform:scaleX(0.907)">SCREW</span></div>
<div class="td" style="left:537px;width:54px"><span style="transform:scaleX(0.97)"></span></div>
<div class="td" style="left:592px;width:51px"><span style="transform:scaleX(0.97)"></span></div>
<div class="td" style="left:644px;width:70px"><span style="transform:scaleX(0.97)"></span></div>
</div>
<div class="tr" style="top:341px">
<div class="td" style="left:0px;width:79px"><svg class="ic" style="left:5.7px;top:3.6px" width="10.6" height="10.6" viewBox="0 0 12 12"><use href="#i-gear"/></svg><svg class="ic" style="left:21px;top:1px" width="17.2" height="15" viewBox="0 0 18 16" preserveAspectRatio="none"><use href="#i-cart"/></svg><svg class="ic" style="left:40px;top:2px" width="14" height="14" viewBox="0 0 14 14"><use href="#i-info"/></svg></div>
<div class="td" style="left:80px;width:83px"></div>
<div class="td" style="left:164px;width:34px"><span style="transform:scaleX(0.942)">20</span></div>
<div class="td" style="left:199px;width:83px"><span style="transform:scaleX(0.96)">T412490</span></div>
<div class="td" style="left:283px;width:34px"><span style="transform:scaleX(0.97)">2</span></div>
<div class="td" style="left:318px;width:83px"><span style="transform:scaleX(0.96)">T412490</span></div>
<div class="td" style="left:402px;width:134px"><span style="transform:scaleX(0.907)">SCREW</span></div>
<div class="td" style="left:537px;width:54px"><span style="transform:scaleX(0.97)"></span></div>
<div class="td" style="left:592px;width:51px"><span style="transform:scaleX(0.97)"></span></div>
<div class="td" style="left:644px;width:70px"><span style="transform:scaleX(0.97)"></span></div>
</div>
<div class="logo"><svg width="110" height="34" viewBox="554 376 110 34" fill="#3d6a99" stroke="none">
<g transform="translate(556,376) scale(0.04077)">
<rect x="100" y="170" width="680" height="55"/><rect x="245" y="125" width="105" height="140"/><rect x="545" y="125" width="110" height="140"/>
<rect x="160" y="320" width="575" height="48"/><rect x="160" y="320" width="110" height="150"/><rect x="610" y="320" width="125" height="150"/><rect x="400" y="270" width="110" height="250"/>
<rect x="100" y="465" width="680" height="55"/>
<polygon points="380,520 520,520 290,660 120,660"/><polygon points="380,520 520,520 760,660 590,660"/>
</g>
<g transform="translate(590,376) scale(0.04077)">
<path fill-rule="evenodd" d="M195 128L660 128L755 335L640 335L615 300L235 300L215 335L100 335Z M265 245L300 185L555 185L585 245Z"/>
<rect x="375" y="300" width="110" height="300"/><rect x="130" y="400" width="600" height="60"/>
<polygon points="150,495 265,495 320,595 200,595"/><polygon points="600,495 705,495 650,595 540,595"/>
<rect x="95" y="595" width="665" height="60"/>
</g>
<g transform="translate(622,376) scale(0.04077)">
<polygon points="150,130 245,130 335,300 335,420 245,420 245,330"/>
<polygon points="300,130 360,130 250,350 130,350 190,290"/>
<polygon points="230,360 300,360 215,505 130,505"/>
<polygon points="245,300 335,300 335,655 155,655 155,600 245,600"/>
<rect x="345" y="220" width="65" height="300"/>
<polygon points="430,135 500,135 500,580 440,655 370,655 430,570"/>
<rect x="505" y="290" width="80" height="290" opacity="0.8"/>
<rect x="545" y="135" width="260" height="55"/><rect x="620" y="135" width="80" height="520"/>
<rect x="525" y="270" width="275" height="42"/><rect x="525" y="270" width="60" height="310"/><rect x="735" y="270" width="65" height="315"/><rect x="715" y="540" width="85" height="45"/>
</g>
</svg>
</div>
</body></html>
